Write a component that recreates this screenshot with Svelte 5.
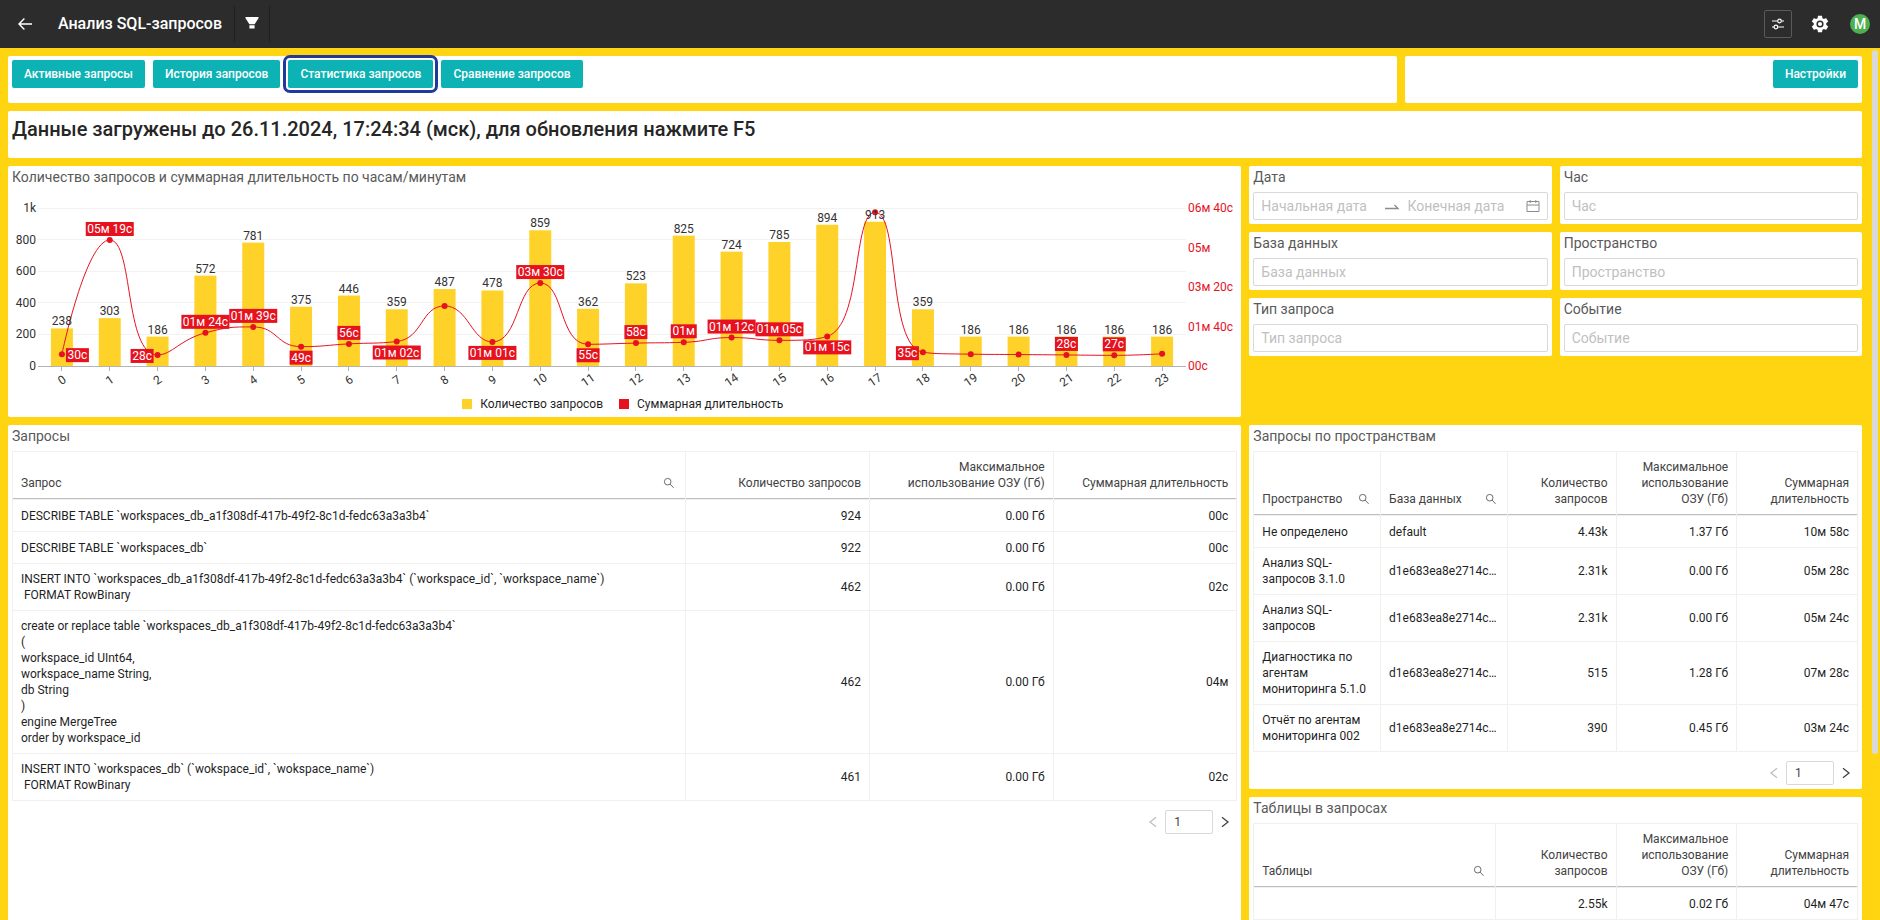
<script>
    const tabs = ["Активные запросы", "История запросов", "Статистика запросов", "Сравнение запросов"];
    let activeTab = 2;

    const filters = [
        { id: "hour", title: "Час" },
        { id: "database", title: "База данных" },
        { id: "space", title: "Пространство" },
        { id: "query-type", title: "Тип запроса" },
        { id: "event", title: "Событие" },
    ];

    // count - requests per hour, sec - total duration, pos - side of the duration label
    const hours = [
        { count: 238, sec: 30, pos: "right" },
        { count: 303, sec: 319, pos: "top" },
        { count: 186, sec: 28, pos: "left" },
        { count: 572, sec: 84, pos: "top" },
        { count: 781, sec: 99, pos: "top" },
        { count: 375, sec: 49, pos: "bottom" },
        { count: 446, sec: 56, pos: "top" },
        { count: 359, sec: 62, pos: "bottom" },
        { count: 487, sec: 152 },
        { count: 478, sec: 61, pos: "bottom" },
        { count: 859, sec: 210, pos: "top" },
        { count: 362, sec: 55, pos: "bottom" },
        { count: 523, sec: 58, pos: "top" },
        { count: 825, sec: 60, pos: "top" },
        { count: 724, sec: 72, pos: "top" },
        { count: 785, sec: 65, pos: "top" },
        { count: 894, sec: 75, pos: "bottom" },
        { count: 913, sec: 389 },
        { count: 359, sec: 35, pos: "left" },
        { count: 186, sec: 30 },
        { count: 186, sec: 29 },
        { count: 186, sec: 28, pos: "top" },
        { count: 186, sec: 27, pos: "top" },
        { count: 186, sec: 31 },
    ];

    const queries = [
        ["DESCRIBE TABLE `workspaces_db_a1f308df-417b-49f2-8c1d-fedc63a3a3b4`", "924", "0.00 Гб", "00с"],
        ["DESCRIBE TABLE `workspaces_db`", "922", "0.00 Гб", "00с"],
        ["INSERT INTO `workspaces_db_a1f308df-417b-49f2-8c1d-fedc63a3a3b4` (`workspace_id`, `workspace_name`)\n FORMAT RowBinary", "462", "0.00 Гб", "02с"],
        ["create or replace table `workspaces_db_a1f308df-417b-49f2-8c1d-fedc63a3a3b4`\n(\nworkspace_id UInt64,\nworkspace_name String,\ndb String\n)\nengine MergeTree\norder by workspace_id", "462", "0.00 Гб", "04м"],
        ["INSERT INTO `workspaces_db` (`wokspace_id`, `wokspace_name`)\n FORMAT RowBinary", "461", "0.00 Гб", "02с"],
    ];

    const spaces = [
        ["Не определено", "default", "4.43k", "1.37 Гб", "10м 58с"],
        ["Анализ SQL-запросов 3.1.0", "d1e683ea8e2714c…", "2.31k", "0.00 Гб", "05м 28с"],
        ["Анализ SQL-запросов", "d1e683ea8e2714c…", "2.31k", "0.00 Гб", "05м 24с"],
        ["Диагностика по агентам мониторинга 5.1.0", "d1e683ea8e2714c…", "515", "1.28 Гб", "07м 28с"],
        ["Отчёт по агентам мониторинга 002", "d1e683ea8e2714c…", "390", "0.45 Гб", "03м 24с"],
    ];

    const tables = [["", "2.55k", "0.02 Гб", "04м 47с"]];

    const zeroY = 178;
    const plotHeight = 158;
    const plotLeft = 26;
    const barWidth = 22;

    let chartWidth = 1225;
    let queriesPage = 1;
    let spacesPage = 1;

    $: plotRight = chartWidth - 51;
    $: step = (plotRight - plotLeft) / hours.length;
    $: points = hours.map((h, i) => ({
        ...h,
        x: plotLeft + step * (i + 0.5),
        barY: zeroY - (h.count / 1000) * plotHeight,
        y: zeroY - (h.sec / 400) * plotHeight,
    }));
    $: linePath = smoothPath(points);
    $: badges = points.filter((p) => p.pos).map(makeBadge);

    function formatDuration(sec) {
        const m = Math.floor(sec / 60);
        const s = sec % 60;
        const parts = [];
        if (m) parts.push(String(m).padStart(2, "0") + "м");
        if (s || !m) parts.push(String(s).padStart(2, "0") + "с");
        return parts.join(" ");
    }

    function makeBadge(p) {
        const text = formatDuration(p.sec);
        const widths = { м: 9, с: 6, " ": 3 };
        const w = Math.round([...text].reduce((sum, ch) => sum + (widths[ch] || 6.75), 3));
        let x = p.x - w / 2;
        let y = p.y - 6;
        if (p.pos === "top") y = p.y - 18;
        if (p.pos === "bottom") y = p.y + 4;
        if (p.pos === "left") x = p.x - 4 - w;
        if (p.pos === "right") x = p.x + 4;
        return { text, w, x, y };
    }

    const clamp = (v, a, b) => Math.max(Math.min(a, b), Math.min(Math.max(a, b), v));

    function smoothPath(pts) {
        let d = `M${pts[0].x},${pts[0].y}`;
        let c0 = pts[0];
        for (let i = 1; i < pts.length; i++) {
            const prev = pts[i - 1];
            const cur = pts[i];
            const next = pts[i + 1];
            let c1 = cur;
            let c2 = cur;
            if (next) {
                const lenPrev = Math.hypot(cur.x - prev.x, cur.y - prev.y);
                const lenNext = Math.hypot(next.x - cur.x, next.y - cur.y);
                const k = (0.5 * lenNext) / (lenNext + lenPrev);
                c2 = {
                    x: clamp(cur.x + (next.x - prev.x) * k, cur.x, next.x),
                    y: clamp(cur.y + (next.y - prev.y) * k, cur.y, next.y),
                };
                c1 = {
                    x: clamp(cur.x - ((c2.x - cur.x) * lenPrev) / lenNext, prev.x, cur.x),
                    y: clamp(cur.y - ((c2.y - cur.y) * lenPrev) / lenNext, prev.y, cur.y),
                };
                c2 = {
                    x: cur.x + ((cur.x - c1.x) * lenNext) / lenPrev,
                    y: cur.y + ((cur.y - c1.y) * lenNext) / lenPrev,
                };
            }
            d += `C${c0.x},${c0.y} ${c1.x},${c1.y} ${cur.x},${cur.y}`;
            c0 = c2;
        }
        return d;
    }
</script>

{#snippet searchIcon()}
    <button class="search" aria-label="Поиск">
        <svg width="12" height="12" viewBox="0 0 12 12"><circle cx="4.7" cy="4.7" r="3.3" /><path d="M7.1 7.1 L10.6 10.8" /></svg>
    </button>
{/snippet}

<div class="app">
    <header>
        <button class="icon-btn back" aria-label="Назад">
            <svg width="16" height="16" viewBox="0 0 16 16"><path d="M15 8H2M7.4 2.6L2 8l5.4 5.4" fill="none" stroke="#fff" stroke-width="1.4" /></svg>
        </button>
        <h1>Анализ SQL-запросов</h1>
        <button class="icon-btn funnel" aria-label="Фильтры">
            <svg width="14" height="14" viewBox="0 0 14 14" fill="#fff"><path d="M.5 1h13v1.2L9.6 8.2H4.4L.5 2.2zM4.4 9.2h5.2v3.4H4.4z" /></svg>
        </button>
        <div class="spacer"></div>
        <button class="icon-btn sliders" aria-label="Параметры">
            <svg width="14" height="14" viewBox="0 0 14 14" fill="none" stroke="#fff" stroke-width="1.2">
                <path d="M1 4h5.6M10.4 4H13M1 10h2M6.8 10H13" />
                <circle cx="8.5" cy="4" r="1.8" /><circle cx="4.9" cy="10" r="1.8" />
            </svg>
        </button>
        <button class="icon-btn gear" aria-label="Настройки системы">
            <svg width="20" height="20" viewBox="0 0 24 24"><path fill="#fff" d="M19.43 12.98c.04-.32.07-.64.07-.98s-.03-.66-.07-.98l2.11-1.65c.19-.15.24-.42.12-.64l-2-3.46c-.12-.22-.39-.3-.61-.22l-2.49 1c-.52-.4-1.08-.73-1.69-.98l-.38-2.65C14.46 2.18 14.25 2 14 2h-4c-.25 0-.46.18-.49.42l-.38 2.65c-.61.25-1.17.59-1.69.98l-2.49-1c-.23-.09-.49 0-.61.22l-2 3.46c-.13.22-.07.49.12.64l2.11 1.65c-.04.32-.07.65-.07.98s.03.66.07.98l-2.11 1.65c-.19.15-.24.42-.12.64l2 3.46c.12.22.39.3.61.22l2.49-1c.52.4 1.08.73 1.69.98l.38 2.65c.03.24.24.42.49.42h4c.25 0 .46-.18.49-.42l.38-2.65c.61-.25 1.17-.59 1.69-.98l2.49 1c.23.09.49 0 .61-.22l2-3.46c.12-.22.07-.49-.12-.64l-2.11-1.65z" /><circle cx="12" cy="12" r="3.4" fill="none" stroke="#2c2c2c" stroke-width="1.8" /></svg>
        </button>
        <button class="avatar">M</button>
    </header>

    <main>
        <div class="row">
            <nav class="card tabs">
                {#each tabs as tab, i}
                    <button class="btn" class:active={i === activeTab} on:click={() => (activeTab = i)}>{tab}</button>
                {/each}
            </nav>
            <div class="card settings">
                <button class="btn">Настройки</button>
            </div>
        </div>

        <div class="card message">
            <h2>Данные загружены до 26.11.2024, 17:24:34 (мск), для обновления нажмите F5</h2>
        </div>

        <div class="row">
            <section class="card wide">
                <h3>Количество запросов и суммарная длительность по часам/минутам</h3>
                <div class="chart" bind:clientWidth={chartWidth}>
                    <svg width={chartWidth} height="208">
                        {#each [0, 200, 400, 600, 800, 1000] as v}
                            {@const y = zeroY - (v / 1000) * plotHeight}
                            <line class="grid" x1={plotLeft} x2={plotRight} y1={y} y2={y} />
                            <text x={plotLeft - 2} y={y + 4} text-anchor="end">{v === 1000 ? "1k" : v}</text>
                        {/each}
                        {#each ["00с", "01м 40с", "03м 20с", "05м", "06м 40с"] as label, i}
                            <text class="red" x={plotRight + 2} y={zeroY - (i / 4) * plotHeight + 4}>{label}</text>
                        {/each}
                        {#each points as p}
                            <rect class="bar" x={p.x - barWidth / 2} y={p.barY} width={barWidth} height={zeroY - p.barY} />
                        {/each}
                        <line class="axis" x1={plotLeft} x2={plotRight} y1={zeroY} y2={zeroY} />
                        {#each points as p, i}
                            <line class="axis" x1={p.x} x2={p.x} y1={zeroY} y2={zeroY + 5} />
                            <text text-anchor="middle" transform="translate({p.x} {zeroY + 14}) rotate(-35)" y="4">{i}</text>
                        {/each}
                        <path class="line" d={linePath} />
                        {#each points as p}
                            <circle class="dot" cx={p.x} cy={p.y} r="3" />
                            <text x={p.x} y={p.barY - 3} text-anchor="middle">{p.count}</text>
                        {/each}
                        {#each badges as b}
                            <rect class="badge" x={b.x} y={b.y} width={b.w} height="14" />
                            <text class="white" x={b.x + b.w / 2} y={b.y + 11} text-anchor="middle">{b.text}</text>
                        {/each}
                    </svg>
                    <div class="legend">
                        <span class="key"><i class="yellow"></i>Количество запросов</span>
                        <span class="key"><i class="crimson"></i>Суммарная длительность</span>
                    </div>
                </div>
            </section>

            <div class="filters">
                <div class="card filter">
                    <label for="date-from">Дата</label>
                    <div class="field range">
                        <input id="date-from" placeholder="Начальная дата" />
                        <svg width="16" height="16" viewBox="0 0 16 16"><path d="M1 10.5h13L10.5 7" fill="none" stroke="#8c8c8c" stroke-width="1.3" /></svg>
                        <input placeholder="Конечная дата" aria-label="Конечная дата" />
                        <svg class="calendar" width="14" height="14" viewBox="0 0 14 14" fill="none" stroke="#8c8c8c"><path d="M1 2.5h12v10H1zM1 6h12M4.2 1v3M9.8 1v3" /></svg>
                    </div>
                </div>
                {#each filters as f}
                    <div class="card filter">
                        <label for={f.id}>{f.title}</label>
                        <input class="field" id={f.id} placeholder={f.title} />
                    </div>
                {/each}
            </div>
        </div>

        <div class="row bottom">
            <section class="card wide">
                <h3>Запросы</h3>
                <table>
                    <colgroup><col class="w55" /><col class="w15" /><col class="w15" /><col class="w15" /></colgroup>
                    <thead>
                        <tr>
                            <th><div class="head">Запрос{@render searchIcon()}</div></th>
                            <th class="num">Количество запросов</th>
                            <th class="num">Максимальное использование ОЗУ (Гб)</th>
                            <th class="num">Суммарная длительность</th>
                        </tr>
                    </thead>
                    <tbody>
                        {#each queries as row}
                            <tr>
                                {#each row as cell, i}
                                    <td class:num={i > 0} class:sql={i === 0}>{cell}</td>
                                {/each}
                            </tr>
                        {/each}
                    </tbody>
                </table>
                <div class="pager">
                    <button disabled aria-label="Предыдущая страница"><svg width="12" height="12" viewBox="0 0 12 12"><path d="M9 1.2L3 6l6 4.8" /></svg></button>
                    <input bind:value={queriesPage} aria-label="Страница" />
                    <button aria-label="Следующая страница"><svg width="12" height="12" viewBox="0 0 12 12"><path d="M3 1.2L9 6l-6 4.8" /></svg></button>
                </div>
            </section>

            <div class="side">
                <section class="card">
                    <h3>Запросы по пространствам</h3>
                    <table>
                        <colgroup><col class="w21" /><col class="w21" /><col class="w18" /><col class="w20" /><col class="w20" /></colgroup>
                        <thead>
                            <tr>
                                <th><div class="head">Пространство{@render searchIcon()}</div></th>
                                <th><div class="head">База данных{@render searchIcon()}</div></th>
                                <th class="num">Количество запросов</th>
                                <th class="num">Максимальное использование ОЗУ (Гб)</th>
                                <th class="num">Суммарная длительность</th>
                            </tr>
                        </thead>
                        <tbody>
                            {#each spaces as row}
                                <tr>
                                    {#each row as cell, i}
                                        <td class:num={i > 1} class:clip={i === 1}>{cell}</td>
                                    {/each}
                                </tr>
                            {/each}
                        </tbody>
                    </table>
                    <div class="pager">
                        <button disabled aria-label="Предыдущая страница"><svg width="12" height="12" viewBox="0 0 12 12"><path d="M9 1.2L3 6l6 4.8" /></svg></button>
                        <input bind:value={spacesPage} aria-label="Страница" />
                        <button aria-label="Следующая страница"><svg width="12" height="12" viewBox="0 0 12 12"><path d="M3 1.2L9 6l-6 4.8" /></svg></button>
                    </div>
                </section>

                <section class="card grow">
                    <h3>Таблицы в запросах</h3>
                    <table>
                        <colgroup><col class="w40" /><col class="w20" /><col class="w20" /><col class="w20" /></colgroup>
                        <thead>
                            <tr>
                                <th><div class="head">Таблицы{@render searchIcon()}</div></th>
                                <th class="num">Количество запросов</th>
                                <th class="num">Максимальное использование ОЗУ (Гб)</th>
                                <th class="num">Суммарная длительность</th>
                            </tr>
                        </thead>
                        <tbody>
                            {#each tables as row}
                                <tr>
                                    {#each row as cell, i}
                                        <td class:num={i > 0}>{cell}</td>
                                    {/each}
                                </tr>
                            {/each}
                        </tbody>
                    </table>
                </section>
            </div>
        </div>
    </main>
    <div class="scrollbar"></div>
</div>

<style>
    :global(body) {
        margin: 0;
        font-family: Roboto, "Liberation Sans", sans-serif;
        font-size: 12px;
        color: #1f1f1f;
    }

    * {
        box-sizing: border-box;
    }

    button,
    input {
        font-family: inherit;
        margin: 0;
    }

    button {
        cursor: pointer;
    }

    .app {
        position: relative;
        display: flex;
        flex-direction: column;
        height: 100vh;
        background: #ffd512;
    }

    header {
        flex: none;
        display: flex;
        align-items: center;
        height: 48px;
        padding-right: 10px;
        background: #2c2c2c;
    }

    h1 {
        margin: 0 12px 0 0;
        font-size: 16px;
        font-weight: 500;
        line-height: 24px;
        color: #fff;
    }

    .spacer {
        flex: 1;
    }

    .icon-btn {
        display: flex;
        align-items: center;
        justify-content: center;
        padding: 0;
        border: none;
        background: none;
    }

    .back {
        width: 50px;
        height: 48px;
        margin-right: 8px;
    }

    .funnel {
        width: 36px;
        height: 36px;
        border: solid #1f1f1f;
        border-width: 0 1px;
        padding-bottom: 2px;
    }

    .sliders {
        width: 28px;
        height: 28px;
        border: 1px solid #5a5a5a;
        border-radius: 2px;
        margin-right: 16px;
    }

    .gear {
        width: 24px;
        height: 24px;
        margin-right: 18px;
    }

    .avatar {
        width: 20px;
        height: 20px;
        padding: 0;
        border: none;
        border-radius: 50%;
        background: #4caf50;
        color: #fff;
        font-size: 14px;
        font-weight: 500;
        line-height: 20px;
    }

    main {
        flex: 1;
        min-height: 0;
        display: flex;
        flex-direction: column;
        gap: 8px;
        padding: 8px 18px 8px 8px;
        overflow-y: auto;
        scrollbar-width: none;
    }

    main > * {
        flex: none;
    }

    .row {
        display: grid;
        grid-template-columns: repeat(12, minmax(0, 1fr));
        gap: 8px;
    }

    .card {
        background: #fff;
        border-radius: 2px;
        padding: 0 4px 4px;
    }

    .tabs,
    .settings {
        display: flex;
        gap: 8px;
        padding: 4px 4px 15px;
    }

    .tabs {
        grid-column: span 9;
    }

    .settings {
        grid-column: span 3;
        justify-content: flex-end;
    }

    .btn {
        height: 28px;
        padding: 0 12px;
        border: none;
        border-radius: 2px;
        background: #0cb2b4;
        color: #fff;
        font-size: 12px;
        font-weight: 500;
    }

    .btn.active {
        outline: 3px solid #20399c;
        outline-offset: 2px;
    }

    .message {
        padding: 4px 4px 15px;
    }

    h2 {
        margin: 0;
        font-size: 20px;
        font-weight: 500;
        line-height: 28px;
        color: #262626;
    }

    h3,
    label {
        display: block;
        margin: 0;
        font-size: 14px;
        font-weight: 400;
        line-height: 22px;
        color: #595959;
    }

    .wide {
        grid-column: span 8;
    }

    .chart {
        padding-bottom: 1px;
    }

    .chart svg {
        display: block;
    }

    .chart text {
        font-size: 12px;
        fill: #333;
    }

    .chart .red {
        fill: #e6121f;
    }

    .chart .white {
        fill: #fff;
    }

    .grid {
        stroke: #f2f2f2;
        shape-rendering: crispEdges;
    }

    .axis {
        stroke: #b3b3b3;
        shape-rendering: crispEdges;
    }

    .bar {
        fill: #ffd22a;
    }

    .badge,
    .dot {
        fill: #e6121f;
    }

    .line {
        fill: none;
        stroke: #e6121f;
    }

    .legend {
        display: flex;
        justify-content: center;
        gap: 16px;
        padding-right: 4px;
        line-height: 16px;
    }

    .key {
        display: flex;
        align-items: center;
        gap: 8px;
    }

    .key i {
        width: 10px;
        height: 10px;
    }

    .yellow {
        background: #ffd22a;
    }

    .crimson {
        background: #e6121f;
    }

    .filters {
        grid-column: span 4;
        align-self: start;
        display: grid;
        grid-template-columns: repeat(2, minmax(0, 1fr));
        gap: 8px;
    }

    .filter label {
        margin-bottom: 4px;
    }

    .field {
        display: block;
        width: 100%;
        height: 28px;
        padding: 0 7px 1px;
        border: 1px solid #d9d9d9;
        border-radius: 2px;
        background: #fff;
        font-size: 14px;
    }

    .range {
        display: flex;
        align-items: center;
    }

    .range input {
        flex: 1;
        min-width: 0;
        padding: 0;
        border: none;
        outline: none;
        font-size: 14px;
    }

    .range svg {
        flex: none;
        margin: 0 8px;
    }

    .range .calendar {
        margin: 0 0 0 4px;
    }

    input::placeholder {
        color: #bfbfbf;
        opacity: 1;
    }

    .bottom {
        min-height: 640px;
    }

    .side {
        grid-column: span 4;
        display: flex;
        flex-direction: column;
        gap: 8px;
    }

    .grow {
        flex: 1;
    }

    table {
        width: 100%;
        margin-top: 4px;
        table-layout: fixed;
        border-spacing: 0;
        border: solid #f0f0f0;
        border-width: 1px 0 0 1px;
        line-height: 16px;
    }

    th,
    td {
        height: 32px;
        padding: 7px 8px;
        border: solid #f0f0f0;
        border-width: 0 1px 1px 0;
        text-align: left;
    }

    th {
        font-weight: 400;
        vertical-align: bottom;
        color: #434343;
        box-shadow: inset 0 -1px #bfbfbf;
        padding-bottom: 8px;
    }

    .num {
        text-align: right;
    }

    .sql {
        white-space: pre-wrap;
    }

    .clip {
        overflow: hidden;
        white-space: nowrap;
        text-overflow: ellipsis;
    }

    .head {
        display: flex;
        align-items: center;
        justify-content: space-between;
    }

    .search {
        display: flex;
        padding: 0 2px 0 0;
        border: none;
        background: none;
    }

    .search svg {
        fill: none;
        stroke: #6b6b6b;
    }

    .w15 { width: 15%; }
    .w18 { width: 18%; }
    .w20 { width: 20%; }
    .w21 { width: 21%; }
    .w40 { width: 40%; }
    .w55 { width: 55%; }

    .pager {
        display: flex;
        justify-content: flex-end;
        margin-top: 9px;
    }

    .pager input {
        width: 48px;
        height: 24px;
        padding: 0 8px;
        border: 1px solid #d9d9d9;
        border-radius: 2px;
        font-size: 12px;
        color: #434343;
    }

    .pager button {
        display: flex;
        align-items: center;
        justify-content: center;
        width: 24px;
        height: 24px;
        padding: 0;
        border: none;
        background: none;
    }

    .pager svg {
        fill: none;
        stroke: #434343;
        stroke-width: 1.3;
    }

    .pager button:disabled svg {
        stroke: #bfbfbf;
    }

    .scrollbar {
        position: absolute;
        top: 50px;
        right: 2px;
        width: 6px;
        height: 704px;
        border-radius: 3px;
        background: #d9d9d9;
    }
</style>
